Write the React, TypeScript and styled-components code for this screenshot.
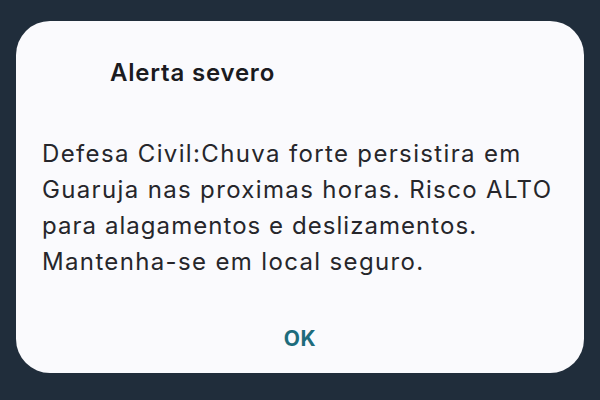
import React from "react"
import styled, { createGlobalStyle } from "styled-components"

const GlobalStyle = createGlobalStyle`
  html, body {
    margin: 0;
    padding: 0;
    background: #202d3b;
  }
  body {
    width: 600px;
    height: 400px;
    overflow: hidden;
    font-family: Inter, "Open Sans", sans-serif;
  }
`

const Screen = styled.div`
  width: 600px;
  height: 400px;
  box-sizing: border-box;
  padding: 21px 16px 27px;
  background: #202d3b;
`

const Dialog = styled.div`
  height: 352px;
  box-sizing: border-box;
  background: #fafafd;
  border-radius: 34px;
  display: flex;
  flex-direction: column;
  padding: 37px 26px 0;
`

const Title = styled.h2`
  margin: 0 0 0 68px;
  font-size: 24px;
  line-height: 30px;
  font-weight: 600;
  letter-spacing: 0.8px;
  color: #1b1b1f;
`

const Message = styled.p`
  margin: 48px 0 0;
  font-size: 24px;
  line-height: 36px;
  font-weight: 400;
  color: #26262b;
  white-space: nowrap;
`

const Line = styled.span<{ $tracking?: number }>`
  display: block;
  letter-spacing: ${p => p.$tracking ?? 1.35}px;
`

const Actions = styled.div`
  display: flex;
  justify-content: center;
  margin-top: 47px;
`

const OkButton = styled.button`
  border: 0;
  background: none;
  padding: 0;
  font-family: inherit;
  font-size: 21px;
  line-height: 24px;
  font-weight: 700;
  letter-spacing: 0.6px;
  color: #1d6c7c;
  cursor: pointer;
`

const lines = [
  { text: "Defesa Civil:Chuva forte persistira em" },
  { text: "Guaruja nas proximas horas. Risco ALTO" },
  { text: "para alagamentos e deslizamentos.", tracking: 1.05 },
  { text: "Mantenha-se em local seguro." },
]

const App = (): JSX.Element => {
  return (
    <>
      <GlobalStyle />
      <Screen>
        <Dialog>
          <Title>Alerta severo</Title>
          <Message>
            {lines.map(line => (
              <Line key={line.text} $tracking={line.tracking}>
                {line.text}
              </Line>
            ))}
          </Message>
          <Actions>
            <OkButton>OK</OkButton>
          </Actions>
        </Dialog>
      </Screen>
    </>
  )
}

export default App
